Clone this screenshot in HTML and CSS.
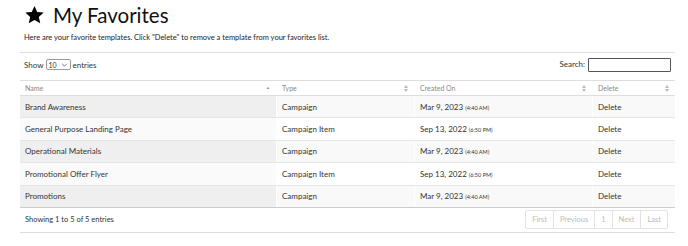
FILE: index.html
```html
<!DOCTYPE html>
<html lang="en">
<head>
    <meta charset="UTF-8">
    <title>My Favorites</title>
    <link rel="stylesheet" href="styles.css">
</head>
<body>
    <div class="page">
        <h1 class="title">
            <svg class="star" viewBox="0 0 24 24" width="21" height="20"><path d="M12 1.2l3.3 7.1 7.7.8-5.8 5.2 1.7 7.6L12 18l-6.9 3.9 1.7-7.6L1 9.1l7.7-.8z" fill="#000"/></svg>
            My Favorites
        </h1>
        <p class="intro">Here are your favorite templates. Click "Delete" to remove a template from your favorites list.</p>

        <div class="controls">
            <label class="length">Show
                <span class="select">10 <svg viewBox="0 0 8 5" width="7" height="4"><path d="M1 1l3 3 3-3" fill="none" stroke="#555" stroke-width="1"/></svg></span>
                entries</label>
            <label class="search">Search: <input type="text"></label>
        </div>

        <table class="favorites">
            <thead>
                <tr>
                    <th class="col-name sorted">Name <span class="sort up">&#9650;</span></th>
                    <th class="col-type">Type <span class="sort both"></span></th>
                    <th class="col-date">Created On <span class="sort both"></span></th>
                    <th class="col-del">Delete <span class="sort both"></span></th>
                </tr>
            </thead>
            <tbody>
                <tr class="odd">
                    <td class="sorted">Brand Awareness</td>
                    <td>Campaign</td>
                    <td>Mar 9, 2023 <small>(4:40 AM)</small></td>
                    <td>Delete</td>
                </tr>
                <tr class="even">
                    <td class="sorted">General Purpose Landing Page</td>
                    <td>Campaign Item</td>
                    <td>Sep 13, 2022 <small>(6:50 PM)</small></td>
                    <td>Delete</td>
                </tr>
                <tr class="odd">
                    <td class="sorted">Operational Materials</td>
                    <td>Campaign</td>
                    <td>Mar 9, 2023 <small>(4:40 AM)</small></td>
                    <td>Delete</td>
                </tr>
                <tr class="even">
                    <td class="sorted">Promotional Offer Flyer</td>
                    <td>Campaign Item</td>
                    <td>Sep 13, 2022 <small>(6:50 PM)</small></td>
                    <td>Delete</td>
                </tr>
                <tr class="odd">
                    <td class="sorted">Promotions</td>
                    <td>Campaign</td>
                    <td>Mar 9, 2023 <small>(4:40 AM)</small></td>
                    <td>Delete</td>
                </tr>
            </tbody>
        </table>

        <div class="footer">
            <div class="info">Showing 1 to 5 of 5 entries</div>
            <div class="paging">
                <span>First</span><span>Previous</span><span>1</span><span>Next</span><span>Last</span>
            </div>
        </div>
    </div>
</body>
</html>
```

FILE: styles.css
```css
body {
    margin: 0;
    font-family: Lato, "Open Sans", sans-serif;
    color: #333;
    background: #fff;
}
.page {
    padding: 0 13px 0 20px;
}
.title {
    display: flex;
    align-items: center;
    gap: 8px;
    margin: 0;
    padding: 3px 0 0 4px;
    height: 24px;
    font-size: 20.5px;
    font-weight: 400;
    color: #111;
}
.star {
    margin-top: -1px;
}
.intro {
    margin: 0;
    padding: 6px 0 0 4px;
    height: 19px;
    font-size: 7.5px;
    color: #222;
    border-bottom: 1px solid #ddd;
}
.controls {
    display: flex;
    justify-content: space-between;
    align-items: center;
    height: 23px;
    padding: 0 4px 4px;
    font-size: 8px;
    color: #333;
}
.length {
    display: flex;
    align-items: center;
    gap: 2px;
}
.select {
    display: inline-flex;
    align-items: center;
    justify-content: space-between;
    width: 19px;
    height: 9px;
    padding: 0 2px;
    border: 1px solid #999;
    border-radius: 2px;
    font-size: 7px;
}
.search input {
    width: 77px;
    height: 10px;
    margin-left: 1px;
    border: 1px solid #555;
    border-radius: 1px;
    vertical-align: middle;
}
.favorites {
    width: 100%;
    border-collapse: collapse;
    font-size: 8px;
}
.favorites th {
    height: 14px;
    padding: 0 5px;
    text-align: left;
    font-weight: 400;
    font-size: 7px;
    color: #888;
    border-top: 1px solid #ddd;
    border-bottom: 1px solid #ddd;
    position: relative;
}
.favorites th + th,
.favorites td + td {
    border-left: 1px solid #fff;
}
.col-name { width: 246px; }
.col-type { width: 127px; }
.col-date { width: 167px; }
.sort {
    position: absolute;
    right: 6px;
    top: 4px;
    font-size: 4px;
    color: #888;
}
.sort.both {
    width: 4px;
    height: 7px;
    top: 4px;
}
.sort.both::before,
.sort.both::after {
    content: "";
    position: absolute;
    left: 0;
    width: 0;
    height: 0;
    border-left: 2px solid transparent;
    border-right: 2px solid transparent;
}
.sort.both::before {
    top: 0;
    border-bottom: 3px solid #bbb;
}
.sort.both::after {
    bottom: 0;
    border-top: 3px solid #bbb;
}
.favorites td {
    height: 21.4px;
    padding: 0 5px;
    border-bottom: 1px solid #e6e6e6;
    color: #333;
}
.favorites td small {
    font-size: 5.5px;
}
.favorites tr.odd td { background: #f9f9f9; }
.favorites tr.odd td.sorted { background: #efefef; }
.favorites tr.even td { background: #fff; }
.favorites tr.even td.sorted { background: #fafafa; }
.favorites tbody tr:last-child td {
    border-bottom: 1px solid #ccc;
}
.footer {
    display: flex;
    justify-content: space-between;
    align-items: center;
    height: 24px;
    padding: 0 7px 0 5px;
    border-bottom: 1px solid #ddd;
    font-size: 7.5px;
}
.paging {
    display: flex;
}
.paging span {
    padding: 0 6px;
    height: 17px;
    line-height: 17px;
    border: 1px solid #e3e3e3;
    margin-left: -1px;
    color: #bbb;
    font-size: 7.5px;
}
.paging span:first-child {
    border-radius: 2px 0 0 2px;
}
.paging span:last-child {
    border-radius: 0 2px 2px 0;
}
```
